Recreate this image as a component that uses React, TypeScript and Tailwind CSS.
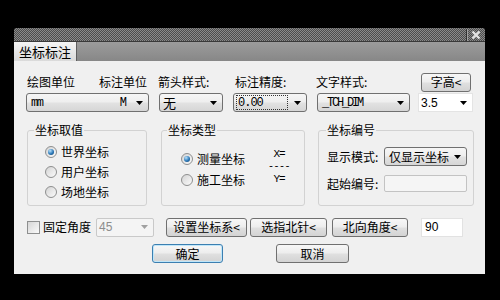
import React from "react";

function Arrow({ color = "#000" }: { color?: string }) {
  return (
    <svg width="7" height="4" viewBox="0 0 7 4" className="shrink-0">
      <polygon points="0,0 7,0 3.5,4" fill={color} />
    </svg>
  );
}

function Radio({ on, label }: { on?: boolean; label: string }) {
  return (
    <div className="flex items-center gap-[4px]">
      <span className="flex h-[12px] w-[12px] items-center justify-center rounded-full border border-[#8e8f8f] bg-[linear-gradient(135deg,#d4d4d4,#fbfbfb)]">
        {on && (
          <span className="h-[6px] w-[6px] rounded-full bg-[radial-gradient(circle_at_35%_30%,#b9e2fb,#2b78b8_55%,#0d3c66)]" />
        )}
      </span>
      <span className="leading-none">{label}</span>
    </div>
  );
}

// 下拉框
function Combo({ className, children }: { className: string; children: React.ReactNode }) {
  return (
    <div
      className={
        "flex h-[19px] items-center justify-between rounded-[3px] border border-[#707070] bg-[linear-gradient(#f6f6f6,#eeeeee_48%,#e2e2e2_52%,#d6d6d6)] pr-[5px] " +
        className
      }
    >
      {children}
      <Arrow />
    </div>
  );
}

function Btn({ className, children }: { className: string; children: React.ReactNode }) {
  return (
    <div
      className={
        "flex h-[19px] items-center justify-center rounded-[3px] border bg-[linear-gradient(#f7f7f7,#ededed_48%,#e0e0e0_52%,#d3d3d3)] leading-none " +
        className
      }
    >
      {children}
    </div>
  );
}

export default function App() {
  return (
    <div className="h-[300px] w-[500px] overflow-hidden bg-black pt-[28px] pl-[14px] font-['Noto_Sans_CJK_SC',sans-serif] text-[12px] text-black">
      <div className="w-[471px] overflow-hidden rounded-t-[3px]">
        {/* 标题栏 */}
        <div className="flex h-[14px] items-center justify-end border-b border-[#3a3a3a] bg-[#666] bg-[image:repeating-conic-gradient(#4c4c4c_0_25%,#8a8a8a_0_50%)] bg-[length:2px_2px] pr-[2px]">
          <div className="h-[12px] w-[1px] bg-[#333]" />
          <div className="h-[12px] w-[1px] bg-[#a0a0a0]" />
          <div className="flex h-[13px] w-[15px] items-center justify-center">
            <svg width="10" height="10" viewBox="0 0 10 10">
              <path d="M1.5 1.5 L8.5 8.5 M8.5 1.5 L1.5 8.5" stroke="#e4e4e4" strokeWidth="2.4" />
            </svg>
          </div>
        </div>

        {/* 标签页 */}
        <div className="flex h-[19px] bg-[linear-gradient(#9c9c9c,#878787)]">
          <div className="flex w-[63px] items-center justify-center border-r border-[#5e5e5e] bg-[linear-gradient(#f4f4f4,#dadada)] text-[13px] leading-none">
            坐标标注
          </div>
        </div>

        {/* 内容 */}
        <div className="h-[213px] bg-[#f0f0f0] pt-[12px] pl-[12px]">
          {/* 标签行 */}
          <div className="flex h-[18px] items-center leading-none">
            <div className="flex w-[123px] justify-between pl-[1px] pr-[2px]">
              <span>绘图单位</span>
              <span>标注单位</span>
            </div>
            <div className="ml-[9px] w-[64px]">箭头样式:</div>
            <div className="ml-[10px] w-[74px] pl-[3px]">标注精度:</div>
            <div className="ml-[10px] w-[93px]">文字样式:</div>
            <div className="ml-[8px] w-[55px] pl-[4px]">
              <Btn className="h-[18px] w-[50px] border-[#707070]">字高&lt;</Btn>
            </div>
          </div>

          {/* 下拉行 */}
          <div className="mt-[2px] flex items-center">
            <Combo className="w-[123px] pl-[4px]">
              <div className="flex w-[96px] justify-between font-['Liberation_Mono',monospace] text-[12px] leading-none">
                <span className="tracking-[-1.5px]">mm</span>
                <span>M</span>
              </div>
              <span className="flex-1" />
            </Combo>
            <Combo className="ml-[10px] w-[64px] pl-[3px]">
              <span className="text-[13px] leading-none">无</span>
            </Combo>
            <Combo className="ml-[10px] w-[74px] pl-[2px]">
              <div className="flex h-[15px] w-[52px] items-center border border-dotted border-[#333] pl-[1px] font-['Liberation_Mono',monospace] text-[12px] leading-none tracking-[-1px]">
                0.00
              </div>
            </Combo>
            <Combo className="ml-[10px] w-[93px] pl-[4px]">
              <span className="font-['Liberation_Mono',monospace] text-[12px] leading-none tracking-[-2.2px]">_TCH_DIM</span>
            </Combo>
            <div className="ml-[8px] flex h-[19px] w-[55px] items-center justify-between border border-[#e4e4e4] bg-white pr-[5px] pl-[2px]">
              <span className="font-['Liberation_Sans',sans-serif] text-[12px] leading-none">3.5</span>
              <Arrow />
            </div>
          </div>

          {/* 分组 */}
          <div className="mt-[18px] flex">
            <div className="relative ml-[1px] h-[76px] w-[120px] rounded-[3px] border border-[#d2d2d2] pt-[11px] pl-[17px]">
              <span className="absolute -top-[7px] left-[6px] bg-[#f0f0f0] px-[1px] leading-none">坐标取值</span>
              <div className="flex h-[20px] items-center"><Radio on label="世界坐标" /></div>
              <div className="flex h-[20px] items-center"><Radio label="用户坐标" /></div>
              <div className="flex h-[20px] items-center"><Radio label="场地坐标" /></div>
            </div>

            <div className="relative ml-[14px] flex h-[76px] w-[144px] rounded-[3px] border border-[#d2d2d2] pt-[17px] pl-[19px]">
              <span className="absolute -top-[7px] left-[5px] bg-[#f0f0f0] px-[1px] leading-none">坐标类型</span>
              <div className="w-[86px]">
                <div className="flex h-[21px] items-center"><Radio on label="测量坐标" /></div>
                <div className="flex h-[21px] items-center"><Radio label="施工坐标" /></div>
              </div>
              <div className="flex w-[24px] flex-col items-center font-['Liberation_Mono',monospace]">
                <span className="h-[12px] text-[11px] leading-[12px] tracking-[-1.2px]">X=</span>
                <span className="h-[13px] text-[10px] leading-[13px] tracking-[-0.5px]">----</span>
                <span className="h-[12px] text-[11px] leading-[12px] tracking-[-1.2px]">Y=</span>
              </div>
            </div>

            <div className="relative ml-[13px] h-[76px] w-[156px] rounded-[3px] border border-[#d2d2d2] pt-[16px] pl-[8px]">
              <span className="absolute -top-[7px] left-[7px] bg-[#f0f0f0] px-[1px] leading-none">坐标编号</span>
              <div className="flex items-center">
                <span className="w-[57px] leading-none">显示模式:</span>
                <Combo className="w-[83px] pl-[4px]">
                  <span className="leading-none">仅显示坐标</span>
                </Combo>
              </div>
              <div className="mt-[9px] flex items-center">
                <span className="w-[57px] leading-none">起始编号:</span>
                <div className="h-[17px] w-[83px] rounded-[2px] border border-[#c3c3c3] bg-[#f5f5f5]" />
              </div>
            </div>
          </div>

          {/* 底部行 */}
          <div className="mt-[10px] flex h-[22px] items-center">
            <span className="ml-[1px] h-[13px] w-[13px] border border-[#8e8f8f] bg-[linear-gradient(135deg,#d6d6d6,#fafafa)]" />
            <span className="ml-[3px] leading-none">固定角度</span>
            <div className="ml-[5px] flex h-[19px] w-[58px] items-center justify-between rounded-[2px] border border-[#c9c9c9] bg-[#f4f4f4] pr-[5px] pl-[2px]">
              <span className="font-['Liberation_Sans',sans-serif] text-[12px] leading-none text-[#8d8d8d]">45</span>
              <Arrow color="#a0a0a0" />
            </div>
            <Btn className="ml-[12px] w-[81px] border-[#707070]">设置坐标系&lt;</Btn>
            <Btn className="ml-[3px] w-[77px] border-[#707070]">选指北针&lt;</Btn>
            <Btn className="ml-[5px] w-[76px] border-[#707070]">北向角度&lt;</Btn>
            <div className="ml-[13px] flex h-[19px] w-[42px] items-center border border-[#e2e2e2] bg-white pl-[3px]">
              <span className="font-['Liberation_Sans',sans-serif] text-[12px] leading-none">90</span>
            </div>
          </div>

          {/* 确定 取消 */}
          <div className="mt-[6px] flex">
            <Btn className="ml-[126px] w-[71px] border-[#3c7fb1] shadow-[inset_0_0_0_1px_#bfe6f9]">确定</Btn>
            <Btn className="ml-[53px] w-[73px] border-[#707070]">取消</Btn>
          </div>
        </div>
      </div>
    </div>
  );
}
